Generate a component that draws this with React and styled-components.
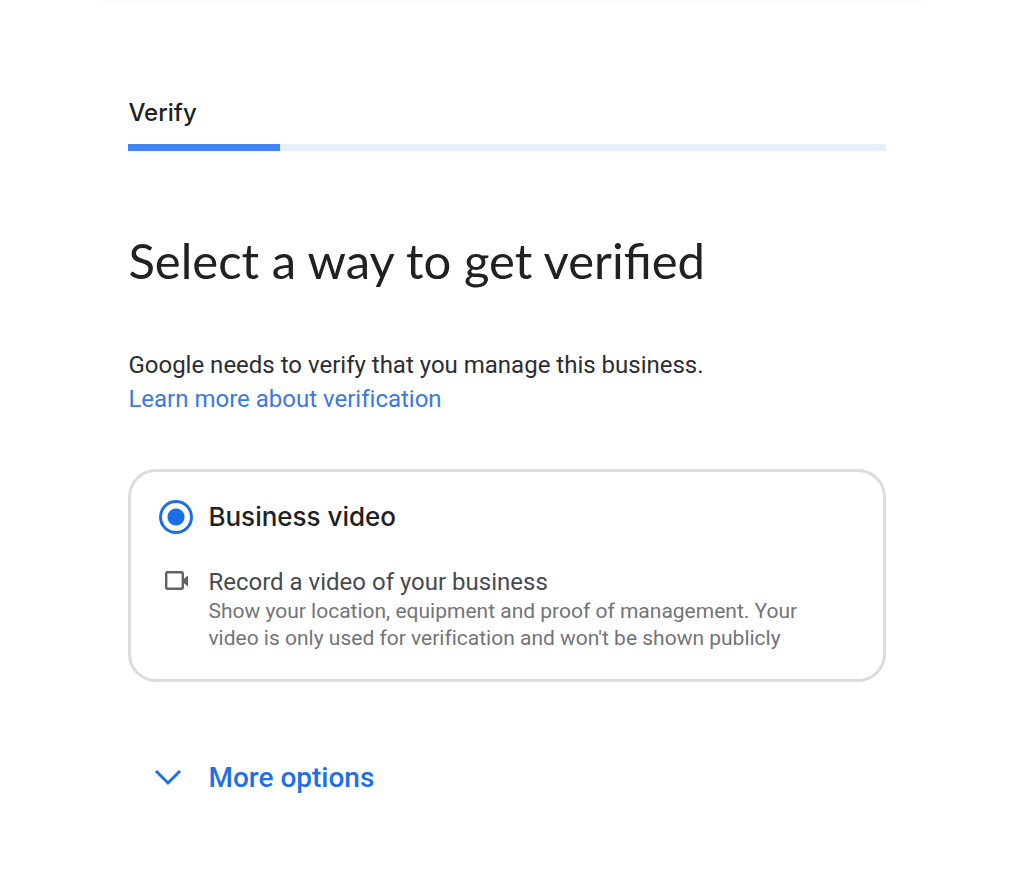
import React, { useState } from 'react';
import styled, { createGlobalStyle } from 'styled-components';

const GlobalStyle = createGlobalStyle`
  * { box-sizing: border-box; }
  body { margin: 0; background: #fff; color: #202124; font-family: Roboto, Arial, sans-serif; }
`;

const Page = styled.main`
  width: 80%;
  margin: 0 auto;
  padding: 0 36px 0 26px;
  border-top: 3px solid #fafafa;
`;

const Step = styled.label`
  display: block;
  padding-top: 94px;
  font: 500 24px/32px Inter, sans-serif;
`;

const Progress = styled.progress`
  appearance: none;
  display: block;
  width: 100%;
  height: 7px;
  margin-top: 15px;
  border: 0;
  background: #e6f0fb;
  &::-webkit-progress-bar { background: #e6f0fb; }
  &::-webkit-progress-value { background: #4184f3; }
`;

const Title = styled.h1`
  margin: 77px 0 0;
  font: 400 49px/64px Lato, sans-serif;
`;

const Intro = styled.p`
  margin: 56px 0 0;
  color: #2c2d30;
  font-size: 24px;
  line-height: 34px;
  font-variant-ligatures: none;
`;

const Link = styled.a`
  display: block;
  color: #3b78e7;
  text-decoration: none;
`;

const Card = styled.section`
  margin-top: 53px;
  padding: 28px 28px 27px;
  border: 3px solid #dcdcdc;
  border-radius: 28px;
`;

const Option = styled.label`
  display: grid;
  grid-template-columns: 34px 1fr;
  column-gap: 15px;
  align-items: center;
  font: 500 26px/32px Inter, sans-serif;
`;

const Radio = styled.input`
  appearance: none;
  width: 34px;
  height: 34px;
  margin: 0;
  border: 3px solid #1a6fe8;
  border-radius: 50%;
  background: radial-gradient(circle, #1a6fe8 8px, transparent 9px);
`;

const Method = styled.div`
  display: grid;
  grid-template-columns: 34px 1fr;
  column-gap: 15px;
  margin-top: 32px;
`;

const MethodTitle = styled.h2`
  margin: 0;
  color: #484a4d;
  font-size: 24px;
  font-weight: 400;
  line-height: 32px;
`;

const Detail = styled.p`
  max-width: 620px;
  margin: 0;
  color: #737477;
  font-size: 21px;
  line-height: 27px;
  font-variant-ligatures: none;
`;

const CameraIcon = styled.svg`
  width: 24px;
  height: 20px;
  margin: 5px 0 0 6px;
`;

const More = styled.button`
  display: flex;
  align-items: center;
  gap: 26px;
  margin: 78px 0 0 26px;
  padding: 0;
  border: 0;
  background: none;
  color: #1f6fe5;
  font: 500 28px/36px Roboto, Arial, sans-serif;
`;

export default function App() {
  const [open, setOpen] = useState(false);
  return (
    <>
      <GlobalStyle />
      <Page>
        <Step htmlFor="progress">Verify</Step>
        <Progress id="progress" value="20" max="100" />
        <Title>Select a way to get verified</Title>
        <Intro>
          Google needs to verify that you manage this business.
          <Link href="#verification">Learn more about verification</Link>
        </Intro>
        <Card>
          <Option>
            <Radio type="radio" name="method" defaultChecked />
            Business video
          </Option>
          <Method>
            <CameraIcon viewBox="0 0 24 20" aria-hidden="true">
              <rect x="1.2" y="1.2" width="16.6" height="16.6" rx="1.5" fill="none" stroke="#5f6368" strokeWidth="2.4" />
              <path d="M18 8.5L23 4.5v11L18 11.5z" fill="#5f6368" />
            </CameraIcon>
            <div>
              <MethodTitle>Record a video of your business</MethodTitle>
              <Detail>Show your location, equipment and proof of management. Your video is only used for verification and won't be shown publicly</Detail>
            </div>
          </Method>
        </Card>
        <More type="button" aria-expanded={open} onClick={() => setOpen(!open)}>
          <svg width="28" height="18" viewBox="0 0 28 18" fill="none" aria-hidden="true">
            <path d="M2 2l12 12L26 2" stroke="#1f6fe5" strokeWidth="3" />
          </svg>
          More options
        </More>
      </Page>
    </>
  );
}
